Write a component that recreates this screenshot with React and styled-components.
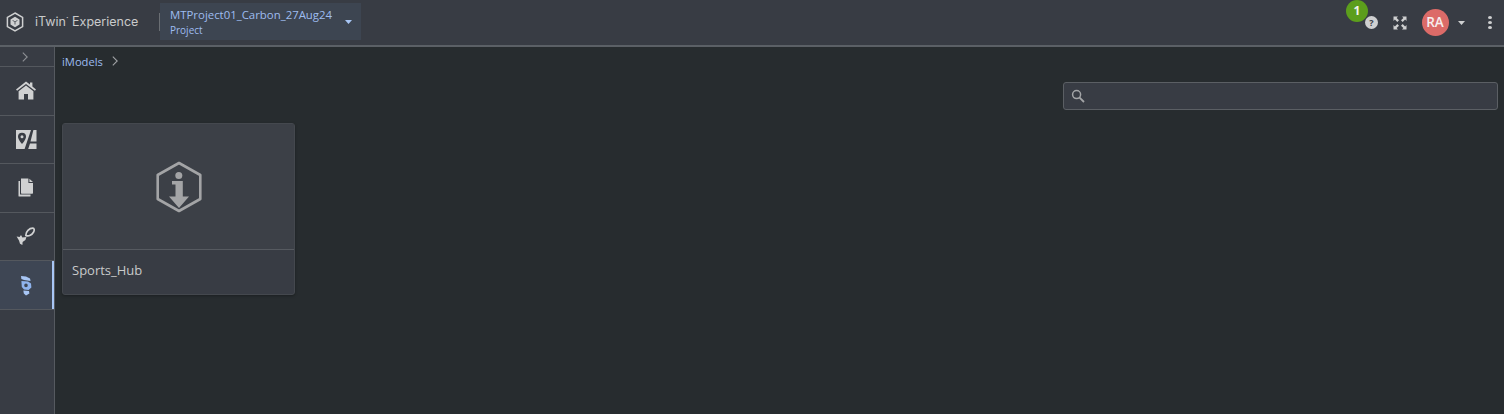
import React from 'react';
import styled, { createGlobalStyle } from 'styled-components';

const GlobalStyle = createGlobalStyle`
  html, body {
    margin: 0;
    padding: 0;
    height: 100%;
    background: #272c2f;
    overflow: hidden;
  }
  * { box-sizing: border-box; }
`;

const navItems = [
  { id: 'home', icon: <HomeIcon /> },
  { id: 'map', icon: <MapIcon /> },
  { id: 'docs', icon: <DocsIcon /> },
  { id: 'plant', icon: <PlantIcon /> },
  { id: 'carbon', icon: <CarbonIcon />, active: true },
];

function HomeIcon() {
  return (
    <svg width="20" height="19" viewBox="0 0 20 19">
      <path fill="#d0d1d2" d="M10 0.5 L14 3.6 V1.6 H16.4 V5.5 L20 8.4 L18.9 9.8 L10 2.9 L1.1 9.8 L0 8.4 Z" />
      <path fill="#d0d1d2" d="M10 4.6 L17.4 10.3 V18.6 H12 V13 H8 V18.6 H2.6 V10.3 Z" />
    </svg>
  );
}

function MapIcon() {
  return (
    <svg width="21" height="21" viewBox="0 0 21 21">
      <path
        fill="#d0d1d2"
        fillRule="evenodd"
        d="M0 1 H15 L8.6 20 H0 Z M6 3.8 A4 4 0 0 0 2 7.8 C2 10.6 6 15 6 15 C6 15 10 10.6 10 7.8 A4 4 0 0 0 6 3.8 Z M6 6.3 A1.5 1.5 0 1 1 6 9.3 A1.5 1.5 0 1 1 6 6.3 Z"
      />
      <path fill="#d0d1d2" d="M17.4 1 H20.5 V12.5 H14.5 Z M14 14.5 H20.5 V20 H12.2 Z" />
    </svg>
  );
}

function DocsIcon() {
  return (
    <svg width="16" height="19" viewBox="0 0 16 19">
      <path fill="#d0d1d2" d="M0.5 3 H2 V16.6 H12.5 V18 Q12.5 18.6 11.8 18.6 H1.2 Q0.5 18.6 0.5 18 Z" />
      <path fill="#d0d1d2" d="M3 0.6 H10.4 V5 H15 V15 Q15 15.7 14.3 15.7 H3.7 Q3 15.7 3 15 Z M11.4 0.8 L15 4 H11.4 Z" />
    </svg>
  );
}

function PlantIcon() {
  return (
    <svg width="20" height="19" viewBox="0 0 20 19">
      <path
        fill="none"
        stroke="#d0d1d2"
        strokeWidth="1.7"
        d="M9.8 8.4 C9.8 4.6 13.2 1.2 16.8 1.2 C18.4 1.2 18.6 3.2 17.6 5 C16.2 7.6 12.6 9.8 9.8 8.4 Z"
      />
      <path fill="#d0d1d2" d="M0.6 9.4 L3.6 10 L5 8 L6.4 10.6 L10.4 10 L9.4 13 L6.6 15 L6.4 18 L4 16.8 L3 13.4 Z" />
    </svg>
  );
}

function CarbonIcon() {
  return (
    <svg width="12" height="21" viewBox="0 0 12 21">
      <path fill="#a8c6f5" d="M1 1 L6 1.6 L10 3.4 L10.6 6 L4 5 L1.4 4 Z" />
      <path fill="#8fb4ee" fillRule="evenodd" d="M1.4 6 L8 6.6 L11 8.4 L11.4 12.4 L8.6 15 L4 14.4 L1.8 12 Z M6 8.6 A1.8 1.8 0 1 0 6 12.2 A1.8 1.8 0 1 0 6 8.6 Z" />
      <path fill="#a8c6f5" d="M3.4 15.6 L9 16 L9.4 18.4 L6 20.4 L3.8 18.6 Z" />
    </svg>
  );
}

function LogoIcon() {
  return (
    <svg width="18" height="20" viewBox="0 0 18 20">
      <path fill="none" stroke="#cfd0d1" strokeWidth="1.5" d="M9 1 L16.6 5.4 V14.6 L9 19 L1.4 14.6 V5.4 Z" />
      <path fill="#cfd0d1" d="M9 4.8 L13.5 7.4 V12.6 L9 15.2 L4.5 12.6 V7.4 Z" />
      <path fill="#3a3f46" d="M6.6 8 L9 9.4 L11.4 8 L11.4 8.8 L9.4 10 V12.6 H8.6 V10 L6.6 8.8 Z" />
    </svg>
  );
}

function Chevron({ size = 10, color = '#8d9094' }) {
  return (
    <svg width={size} height={size} viewBox="0 0 10 10">
      <path fill="none" stroke={color} strokeWidth="1.1" d="M2.8 0.6 L7.2 5 L2.8 9.4" />
    </svg>
  );
}

function Caret({ color }) {
  return (
    <svg width="7" height="4" viewBox="0 0 7 4">
      <path fill={color} d="M0 0 H7 L3.5 4 Z" />
    </svg>
  );
}

function App() {
  return (
    <>
      <GlobalStyle />
      <Page>
        <Header>
          <Brand>
            <LogoIcon />
            <BrandName>iTwin<sup>·</sup> Experience</BrandName>
          </Brand>
          <Divider />
          <ProjectPicker>
            <ProjectText>
              <ProjectName>MTProject01_Carbon_27Aug24</ProjectName>
              <ProjectType>Project</ProjectType>
            </ProjectText>
            <Caret color="#a8c6f5" />
          </ProjectPicker>
          <HeaderActions>
            <HelpButton>
              <Badge>1</Badge>
              <HelpIcon>?</HelpIcon>
            </HelpButton>
            <svg width="14" height="14" viewBox="0 0 14 14">
              <path
                fill="#cfd0d1"
                d="M0.5 0.5 H5 L3.6 1.9 L6 4.3 L4.3 6 L1.9 3.6 L0.5 5 Z M13.5 0.5 V5 L12.1 3.6 L9.7 6 L8 4.3 L10.4 1.9 L9 0.5 Z M0.5 13.5 V9 L1.9 10.4 L4.3 8 L6 9.7 L3.6 12.1 L5 13.5 Z M13.5 13.5 H9 L10.4 12.1 L8 9.7 L9.7 8 L12.1 10.4 L13.5 9 Z"
              />
            </svg>
            <Avatar>RA</Avatar>
            <Caret color="#cfd0d1" />
            <MoreDots>
              <span />
              <span />
              <span />
            </MoreDots>
          </HeaderActions>
        </Header>
        <Body>
          <Sidebar>
            <ToggleRow>
              <Chevron size={10} />
            </ToggleRow>
            {navItems.map((item) => (
              <NavItem key={item.id} $active={item.active}>
                {item.icon}
              </NavItem>
            ))}
          </Sidebar>
          <Content>
            <Breadcrumbs>
              <Crumb>iModels</Crumb>
              <Chevron size={10} color="#a0a2a5" />
            </Breadcrumbs>
            <Toolbar>
              <SearchBox>
                <svg width="14" height="14" viewBox="0 0 14 14">
                  <circle cx="5.6" cy="5.6" r="4" fill="none" stroke="#a3a5a7" strokeWidth="1.5" />
                  <path stroke="#a3a5a7" strokeWidth="1.8" d="M8.6 8.6 L13 13" />
                </svg>
                <SearchInput />
              </SearchBox>
            </Toolbar>
            <Card>
              <Thumbnail>
                <svg width="48" height="54" viewBox="0 0 48 54">
                  <path
                    fill="none"
                    stroke="#a3a4a6"
                    strokeWidth="2.6"
                    strokeLinejoin="round"
                    d="M24 3 L45.3 15 V39 L24 51 L2.7 39 V15 Z"
                  />
                  <circle cx="23.8" cy="15.5" r="3.5" fill="#a3a4a6" />
                  <path fill="#a3a4a6" d="M17 21 H27.8 V36.5 H34 L24 48 L14 36.5 H20.5 V24.5 H17 Z" />
                </svg>
              </Thumbnail>
              <CardTitle>Sports_Hub</CardTitle>
            </Card>
          </Content>
        </Body>
      </Page>
    </>
  );
}

export default App;

const Page = styled.div`
  width: 1504px;
  height: 414px;
  display: flex;
  flex-direction: column;
  font-family: 'Open Sans', sans-serif;
  background: #272c2f;
`;

const Header = styled.header`
  height: 47px;
  flex: none;
  display: flex;
  align-items: center;
  background: #383c44;
  border-bottom: 2px solid #5b6066;
  padding-left: 6px;
`;

const Brand = styled.div`
  display: flex;
  align-items: center;
  gap: 11px;
  width: 153px;
  margin-bottom: 2px;
`;

const BrandName = styled.span`
  font-family: 'Inter', sans-serif;
  font-size: 12.5px;
  color: #c9cacb;
  white-space: nowrap;
  sup {
    font-size: 9px;
    line-height: 0;
  }
`;

const Divider = styled.div`
  width: 1px;
  height: 18px;
  margin-bottom: 2px;
  background: #6a6e73;
`;

const ProjectPicker = styled.div`
  width: 201px;
  height: 37px;
  margin-bottom: 2px;
  display: flex;
  align-items: center;
  justify-content: space-between;
  padding: 0 9px 0 10px;
  background: #3d4551;
`;

const ProjectText = styled.div`
  display: flex;
  flex-direction: column;
`;

const ProjectName = styled.span`
  font-size: 11.4px;
  line-height: 16px;
  color: #9dbcf0;
  white-space: nowrap;
`;

const ProjectType = styled.span`
  font-size: 10px;
  line-height: 14px;
  color: #9dbcf0;
`;

const HeaderActions = styled.div`
  margin-left: auto;
  display: flex;
  align-items: center;
  height: 100%;
`;

const HelpButton = styled.div`
  position: relative;
  margin-right: 15px;
  display: flex;
`;

const HelpIcon = styled.div`
  width: 13px;
  height: 13px;
  border-radius: 50%;
  background: #cfd0d1;
  color: #383c44;
  font-size: 9px;
  font-weight: 700;
  line-height: 13px;
  text-align: center;
`;

const Badge = styled.div`
  position: absolute;
  left: -19px;
  top: -16px;
  width: 22px;
  height: 22px;
  border-radius: 50%;
  background: #5c9e1c;
  color: #f1f3ee;
  font-size: 12px;
  font-weight: 700;
  line-height: 21px;
  text-align: center;
`;

const Avatar = styled.div`
  width: 27px;
  height: 27px;
  margin: 0 9px 0 15px;
  padding-right: 1px;
  border-radius: 50%;
  background: #dc6b68;
  color: #f6eeee;
  font-size: 13.5px;
  font-weight: 600;
  line-height: 27px;
  text-align: center;
`;

const MoreDots = styled.div`
  display: flex;
  flex-direction: column;
  gap: 2px;
  margin: 0 12px 0 23px;
  span {
    width: 4px;
    height: 3px;
    border-radius: 50%;
    background: #cfd0d1;
  }
`;

const Body = styled.div`
  flex: 1;
  min-height: 0;
  display: flex;
`;

const Sidebar = styled.nav`
  width: 55px;
  flex: none;
  background: #383c44;
  border-right: 1px solid #565a60;
`;

const ToggleRow = styled.div`
  height: 20px;
  padding-right: 4px;
  display: flex;
  align-items: center;
  justify-content: center;
  border-bottom: 1px solid #54585e;
`;

const NavItem = styled.div`
  height: 48.6px;
  padding-right: 2px;
  display: flex;
  align-items: center;
  justify-content: center;
  border-bottom: 1px solid #54585e;
  background: ${(props) => (props.$active ? '#3e4654' : 'transparent')};
  box-shadow: ${(props) => (props.$active ? 'inset -2px 0 0 #a8c6f5' : 'none')};
`;

const Content = styled.main`
  flex: 1;
  min-width: 0;
  padding: 0 6px 0 7px;
`;

const Breadcrumbs = styled.div`
  height: 28px;
  display: flex;
  align-items: center;
  gap: 7px;
`;

const Crumb = styled.span`
  font-size: 11.2px;
  color: #9dbcf0;
`;

const Toolbar = styled.div`
  display: flex;
  justify-content: flex-end;
  margin-top: 7px;
`;

const SearchBox = styled.div`
  width: 435px;
  height: 28px;
  display: flex;
  align-items: center;
  gap: 6px;
  padding-left: 7px;
  background: #383c44;
  border: 1px solid #5b5f64;
  border-radius: 3px;
`;

const SearchInput = styled.input`
  flex: 1;
  min-width: 0;
  height: 100%;
  background: transparent;
  border: none;
  outline: none;
  color: #d0d1d2;
`;

const Card = styled.div`
  width: 233px;
  height: 172px;
  margin-top: 13px;
  display: flex;
  flex-direction: column;
  background: #383c44;
  border: 1px solid #44484e;
  border-radius: 3px;
  box-shadow: 0 1px 3px rgba(0, 0, 0, 0.3);
`;

const Thumbnail = styled.div`
  height: 126px;
  flex: none;
  display: flex;
  align-items: center;
  justify-content: center;
  background: #3c4047;
  border-bottom: 1px solid #565a60;
`;

const CardTitle = styled.div`
  flex: 1;
  display: flex;
  align-items: center;
  padding: 0 0 4px 9px;
  font-size: 13px;
  color: #c9cacb;
`;
